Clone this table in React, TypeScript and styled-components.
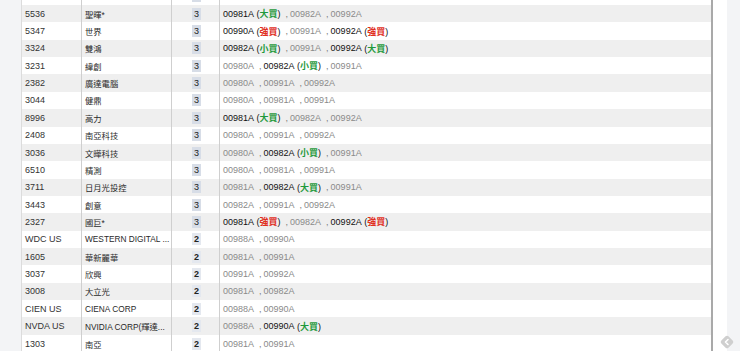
import React from "react";
import styled, { createGlobalStyle } from "styled-components";

const GlobalStyle = createGlobalStyle`
    html, body {
        margin: 0;
        padding: 0;
        height: 100%;
        overflow: hidden;
        background: #f3f4f6;
    }
    body {
        font-family: "Liberation Sans", Arial, "Noto Sans CJK TC", sans-serif;
        font-size: 9px;
        color: #333;
    }
`;

type Tag = "大買" | "小買" | "強買";
type Holding = { code: string; tag?: Tag; strong?: boolean };
type Row = { ticker: string; name: string; count: number; holdings: Holding[] };

const h = (code: string, tag?: Tag, strong?: boolean): Holding => ({ code, tag, strong: strong ?? !!tag });

// first row is mostly scrolled off the top, so only the badge edge shows
const ROWS: Row[] = [
    { ticker: "", name: "", count: 3, holdings: [] },
    { ticker: "5536", name: "聖暉*", count: 3, holdings: [h("00981A", "大買"), h("00982A"), h("00992A")] },
    { ticker: "5347", name: "世界", count: 3, holdings: [h("00990A", "強買"), h("00991A"), h("00992A", "強買")] },
    { ticker: "3324", name: "雙鴻", count: 3, holdings: [h("00982A", "小買"), h("00991A"), h("00992A", "大買")] },
    { ticker: "3231", name: "緯創", count: 3, holdings: [h("00980A"), h("00982A", "小買"), h("00991A")] },
    { ticker: "2382", name: "廣達電腦", count: 3, holdings: [h("00980A"), h("00991A"), h("00992A")] },
    { ticker: "3044", name: "健鼎", count: 3, holdings: [h("00980A"), h("00981A"), h("00991A")] },
    { ticker: "8996", name: "高力", count: 3, holdings: [h("00981A", "大買"), h("00982A"), h("00992A")] },
    { ticker: "2408", name: "南亞科技", count: 3, holdings: [h("00980A"), h("00991A"), h("00992A")] },
    { ticker: "3036", name: "文曄科技", count: 3, holdings: [h("00980A"), h("00982A", "小買"), h("00991A")] },
    { ticker: "6510", name: "精測", count: 3, holdings: [h("00980A"), h("00981A"), h("00991A")] },
    { ticker: "3711", name: "日月光投控", count: 3, holdings: [h("00981A"), h("00982A", "大買"), h("00991A")] },
    { ticker: "3443", name: "創意", count: 3, holdings: [h("00982A"), h("00991A"), h("00992A")] },
    { ticker: "2327", name: "國巨*", count: 3, holdings: [h("00981A", "強買"), h("00982A"), h("00992A", "強買")] },
    { ticker: "WDC US", name: "WESTERN DIGITAL ...", count: 2, holdings: [h("00988A"), h("00990A")] },
    { ticker: "1605", name: "華新麗華", count: 2, holdings: [h("00981A"), h("00991A")] },
    { ticker: "3037", name: "欣興", count: 2, holdings: [h("00991A"), h("00992A")] },
    { ticker: "3008", name: "大立光", count: 2, holdings: [h("00981A"), h("00982A")] },
    { ticker: "CIEN US", name: "CIENA CORP", count: 2, holdings: [h("00988A"), h("00990A")] },
    { ticker: "NVDA US", name: "NVIDIA CORP(輝達...", count: 2, holdings: [h("00988A"), h("00990A", "大買")] },
    { ticker: "1303", name: "南亞", count: 2, holdings: [h("00981A"), h("00991A")] },
];

const Page = styled.div`
    display: flex;
    height: 351px;
    position: relative;
`;

const Gutter = styled.div`
    width: 21px;
    flex: none;
`;

const TableWrap = styled.div`
    width: 692px;
    flex: none;
    background: #fff;
    border-left: 1px solid #dcdcdc;
    border-right: 2px solid #a9a9a9;
    box-sizing: border-box;
    overflow: hidden;
`;

const Side = styled.div`
    width: 14px;
    flex: none;
    background: #fff;
`;

const Table = styled.div`
    margin-top: -12.37px;
    display: grid;
    grid-auto-rows: 17.37px;
`;

const TableRow = styled.div<{ $striped: boolean }>`
    display: grid;
    grid-template-columns: 59px 90px 48px 1fr;
    background: ${(p) => (p.$striped ? "#efefef" : "#fff")};
`;

const Cell = styled.div<{ $center?: boolean }>`
    display: flex;
    align-items: center;
    justify-content: ${(p) => (p.$center ? "center" : "flex-start")};
    padding: 0 1px 0 3px;
    white-space: nowrap;
    overflow: hidden;
    min-width: 0;
    & + & {
        border-left: 1px solid #cfcfcf;
    }
`;

const Name = styled.span`
    font-size: 8.3px;
    color: #2a2a2a;
`;

const Count = styled.span<{ $level: number }>`
    display: inline-block;
    line-height: 12px;
    padding: 0 2px;
    background: ${(p) => (p.$level >= 3 ? "#d7dde7" : "#e4e8ef")};
    color: #222;
    font-weight: ${(p) => (p.$level >= 3 ? 400 : 700)};
`;

const Code = styled.span<{ $strong?: boolean }>`
    color: ${(p) => (p.$strong ? "#111" : "#8a8a8a")};
`;

const Paren = styled.span`
    color: #111;
    margin-left: 2.5px;
`;

const TagText = styled.span<{ $tone: "red" | "green" }>`
    color: ${(p) => (p.$tone === "red" ? "#e0301e" : "#1f9a3c")};
    font-weight: 700;
`;

const Sep = styled.span`
    color: #777;
    padding: 0 2px 0 5px;
`;

const FloatBtn = styled.div`
    position: absolute;
    right: 5px;
    bottom: 1px;
    width: 16px;
    height: 16px;
`;

function Holdings({ items }: { items: Holding[] }) {
    return (
        <>
            {items.map((it, i) => (
                <React.Fragment key={it.code + i}>
                    {i > 0 ? <Sep>,</Sep> : null}
                    <Code $strong={it.strong}>{it.code}</Code>
                    {it.tag ? (
                        <Paren>
                            (<TagText $tone={it.tag === "強買" ? "red" : "green"}>{it.tag}</TagText>)
                        </Paren>
                    ) : null}
                </React.Fragment>
            ))}
        </>
    );
}

export default function App() {
    return (
        <>
            <GlobalStyle />
            <Page>
                <Gutter />
                <TableWrap>
                    <Table>
                        {ROWS.map((r, i) => (
                            <TableRow key={r.ticker + i} $striped={i % 2 === 1}>
                                <Cell>{r.ticker}</Cell>
                                <Cell>
                                    <Name>{r.name}</Name>
                                </Cell>
                                <Cell $center>
                                    <Count $level={r.count}>{r.count}</Count>
                                </Cell>
                                <Cell>
                                    <Holdings items={r.holdings} />
                                </Cell>
                            </TableRow>
                        ))}
                    </Table>
                </TableWrap>
                <Side />
                <FloatBtn>
                    <svg width="16" height="16" viewBox="0 0 16 16">
                        <rect x="3" y="3" width="10" height="10" rx="2" fill="#cfcfcf" transform="rotate(45 8 8)" />
                        <path d="M9 5.5 L6.5 8 L9 10.5" stroke="#fff" strokeWidth="1.6" fill="none" strokeLinecap="round" strokeLinejoin="round" />
                    </svg>
                </FloatBtn>
            </Page>
        </>
    );
}
